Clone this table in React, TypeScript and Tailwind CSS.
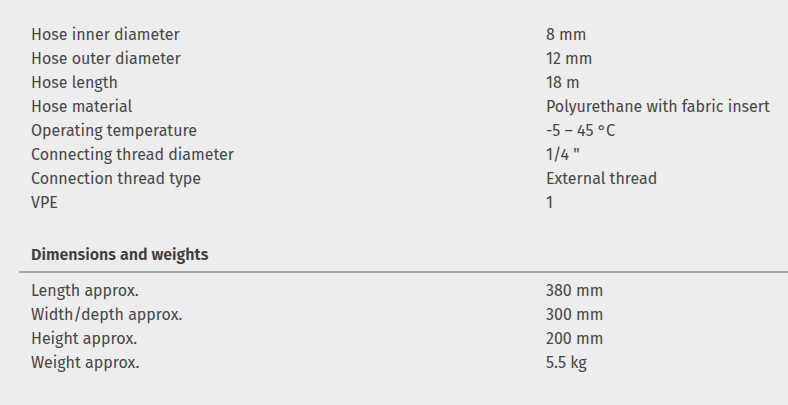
const TECH: [string, string][] = [
  ["Hose inner diameter", "8 mm"],
  ["Hose outer diameter", "12 mm"],
  ["Hose length", "18 m"],
  ["Hose material", "Polyurethane with fabric insert"],
  ["Operating temperature", "-5 – 45 °C"],
  ["Connecting thread diameter", "1/4 \""],
  ["Connection thread type", "External thread"],
  ["VPE", "1"],
];

const DIMS: [string, string][] = [
  ["Length approx.", "380 mm"],
  ["Width/depth approx.", "300 mm"],
  ["Height approx.", "200 mm"],
  ["Weight approx.", "5.5 kg"],
];

function Rows({ rows }: { rows: [string, string][] }) {
  return (
    <div>
      {rows.map(([k, v]) => (
        <div key={k} className="flex h-6 items-center pl-3">
          <span className="w-[515px] shrink-0">{k}</span>
          <span>{v}</span>
        </div>
      ))}
    </div>
  );
}

export default function App() {
  return (
    <div
      className="min-h-[405px] w-full bg-[#ededed] pl-[19px] pt-[23px] text-[16px] text-[#474747]"
      style={{ fontFamily: '"Fira Sans", "Open Sans", sans-serif' }}
    >
      <Rows rows={TECH} />
      <div className="mt-[28px] flex h-6 items-center pl-3 text-[16px] font-semibold text-[#3f3f3f]">
        Dimensions and weights
      </div>
      <div className="mt-[4px] border-t-2 border-[#a9a9a9]" />
      <div className="mt-[6px]">
        <Rows rows={DIMS} />
      </div>
    </div>
  );
}
